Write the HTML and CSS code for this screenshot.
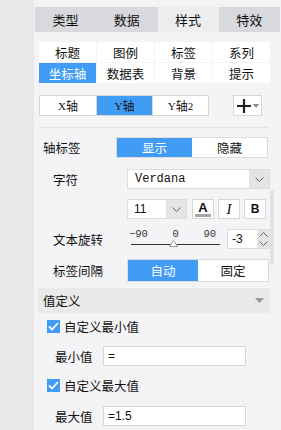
FILE: index.html
```html
<!DOCTYPE html>
<html lang="zh">
<head>
    <meta charset="UTF-8">
    <title>样式面板</title>
    <link rel="stylesheet" href="styles.css">
</head>
<body>
<div id="page">
    <div class="strip"></div>
    <div class="panel">
        <div class="tabs">
            <div class="tab">类型</div>
            <div class="tab">数据</div>
            <div class="tab active">样式</div>
            <div class="tab">特效</div>
        </div>

        <div class="subtabs">
            <div class="sub">标题</div>
            <div class="sub">图例</div>
            <div class="sub">标签</div>
            <div class="sub">系列</div>
            <div class="sub on">坐标轴</div>
            <div class="sub">数据表</div>
            <div class="sub">背景</div>
            <div class="sub">提示</div>
        </div>

        <div class="axisbar">
            <div class="axes">
                <div class="axis"><span class="lt">X</span>轴</div>
                <div class="axis on"><span class="lt">Y</span>轴</div>
                <div class="axis"><span class="lt">Y</span>轴<span class="lt">2</span></div>
            </div>
            <div class="addbtn">
                <svg width="16" height="16" viewBox="0 0 16 16"><path d="M8 1v14M1 8h14" stroke="#222" stroke-width="2.2"/></svg>
                <svg width="6" height="4" viewBox="0 0 6 4"><path d="M0 0h6L3 4z" fill="#888"/></svg>
            </div>
        </div>

        <div class="line"></div>

        <div class="row r1">
            <div class="lbl first">轴标签</div>
            <div class="toggle t1">
                <div class="opt on">显示</div>
                <div class="opt">隐藏</div>
            </div>
        </div>

        <div class="row r2">
            <div class="lbl">字符</div>
            <div class="select wide">
                <div class="val mono">Verdana</div>
                <div class="arrow"><svg width="9" height="5" viewBox="0 0 9 5"><path d="M0.5 0.5l4 4 4-4" fill="none" stroke="#666"/></svg></div>
            </div>
        </div>

        <div class="row r3">
            <div class="lbl"></div>
            <div class="select small">
                <div class="val">11</div>
                <div class="arrow"><svg width="9" height="5" viewBox="0 0 9 5"><path d="M0.5 0.5l4 4 4-4" fill="none" stroke="#666"/></svg></div>
            </div>
            <div class="fbtn color"><span>A</span><i class="swatch"></i></div>
            <div class="fbtn ital">I</div>
            <div class="fbtn bold">B</div>
        </div>

        <div class="row r4">
            <div class="lbl">文本旋转</div>
            <div class="slider">
                <div class="ticks"><span>−90</span><span>0</span><span>90</span></div>
                <div class="track">
                    <svg class="thumb" width="9" height="7" viewBox="0 0 9 7"><path d="M4.5 0.5L8.5 6.5H0.5z" fill="#fff" stroke="#999"/></svg>
                </div>
            </div>
            <div class="spin">
                <div class="num">-3</div>
                <div class="btns">
                    <svg width="9" height="5" viewBox="0 0 9 5"><path d="M0.5 4.5l4-4 4 4" fill="none" stroke="#666"/></svg>
                    <svg width="9" height="5" viewBox="0 0 9 5"><path d="M0.5 0.5l4 4 4-4" fill="none" stroke="#666"/></svg>
                </div>
            </div>
        </div>

        <div class="row r5">
            <div class="lbl">标签间隔</div>
            <div class="toggle t2">
                <div class="opt on">自动</div>
                <div class="opt">固定</div>
            </div>
        </div>

        <div class="section">
            <span>值定义</span>
            <svg width="9" height="5" viewBox="0 0 9 5"><path d="M0 0h9L4.5 5z" fill="#999"/></svg>
        </div>

        <div class="check c1">
            <div class="box"><svg width="11" height="9" viewBox="0 0 11 9"><path d="M1 4.5l3 3L10 1" fill="none" stroke="#fff" stroke-width="1.8"/></svg></div>
            <span>自定义最小值</span>
        </div>
        <div class="field f1">
            <div class="flbl">最小值</div>
            <div class="input">=</div>
        </div>

        <div class="check c2">
            <div class="box"><svg width="11" height="9" viewBox="0 0 11 9"><path d="M1 4.5l3 3L10 1" fill="none" stroke="#fff" stroke-width="1.8"/></svg></div>
            <span>自定义最大值</span>
        </div>
        <div class="field f2">
            <div class="flbl">最大值</div>
            <div class="input">=1.5</div>
        </div>

        <div class="scrollbar"></div>
    </div>
</div>
</body>
</html>
```

FILE: styles.css
```css
*{
    box-sizing: border-box;
}

body{
    margin: 0;
    font-family: "Noto Sans CJK SC", "Liberation Sans", sans-serif;
    font-size: 12px;
    color: #111;
}

#page{
    display: flex;
    width: 281px;
    height: 430px;
    overflow: hidden;
}

.strip{
    width: 35px;
    background-color: #e8e8e8;
}

.panel{
    position: relative;
    flex: 1;
    background-color: #f4f4f6;
    padding: 7px 10px 0 5px;
}

/* top tabs */
.tabs{
    display: flex;
    margin: 0 -9px 0 -4px;
    height: 25px;
}

.tab{
    flex: 1;
    display: flex;
    align-items: center;
    justify-content: center;
    background-color: #d8d9dc;
    font-size: 13px;
}

.tab.active{
    background-color: #ededee;
}

/* sub tabs */
.subtabs{
    display: grid;
    grid-template-columns: repeat(4, 57px);
    grid-auto-rows: 20px;
    gap: 1px;
    margin-top: 10px;
    width: 231px;
}

.sub{
    display: flex;
    align-items: center;
    justify-content: center;
    background-color: #fff;
    font-size: 12.5px;
}

.sub.on{
    background-color: #419cf6;
    color: #fff;
}

/* axis buttons */
.axisbar{
    display: flex;
    align-items: center;
    margin-top: 12px;
    height: 21px;
}

.axes{
    display: flex;
    border: 1px solid #d6d6d6;
    height: 21px;
}

.axis{
    width: 56px;
    display: flex;
    align-items: center;
    justify-content: center;
    background-color: #fff;
    font-size: 12px;
}

.axis + .axis{
    border-left: 1px solid #d6d6d6;
}

.axis.on{
    background-color: #419cf6;
}

.lt{
    font-family: "Liberation Serif", serif;
    font-size: 11px;
}

.addbtn{
    margin-left: 24px;
    width: 29px;
    height: 21px;
    border: 1px solid #d6d6d6;
    background-color: #fff;
    display: flex;
    align-items: center;
    justify-content: center;
    gap: 1px;
}

.line{
    margin-top: 11px;
    height: 1px;
    width: 230px;
    background-color: #e2e2e4;
}

/* form rows */
.row{
    display: flex;
    align-items: center;
}

.lbl{
    width: 88px;
    padding-left: 14px;
    font-size: 12.5px;
    flex-shrink: 0;
}

.lbl.first{
    width: 77px;
    padding-left: 4px;
}

.r1{ margin-top: 9px; height: 21px; }
.r2{ margin-top: 11px; height: 20px; }
.r3{ margin-top: 10px; height: 20px; }
.r4{ margin-top: 10px; height: 20px; }
.r5{ margin-top: 10px; height: 23px; }

.toggle{
    display: flex;
    height: 100%;
    border: 1px solid #dcdcdc;
}

.t1{ width: 152px; }
.t2{ width: 142px; }

.opt{
    flex: 1;
    display: flex;
    align-items: center;
    justify-content: center;
    background-color: #fff;
    font-size: 12.5px;
}

.opt.on{
    background-color: #419cf6;
    color: #fff;
}

.select{
    display: flex;
    height: 100%;
    border: 1px solid #dcdcdc;
    background-color: #fff;
}

.select.wide{ width: 143px; }
.select.small{ width: 60px; }

.val{
    flex: 1;
    display: flex;
    align-items: center;
    padding-left: 6px;
    font-family: "Liberation Sans", sans-serif;
    font-size: 12px;
}

.val.mono{
    font-family: "Liberation Mono", monospace;
    font-size: 12px;
    padding-left: 7px;
}

.arrow{
    width: 20px;
    display: flex;
    align-items: center;
    justify-content: center;
    background-color: #e4e4e6;
}

.fbtn{
    width: 22px;
    height: 20px;
    margin-left: 4px;
    border: 1px solid #d6d6d6;
    background-color: #fff;
    display: flex;
    align-items: center;
    justify-content: center;
}

.fbtn.color{
    margin-left: 5px;
    flex-direction: column;
    gap: 1px;
}

.fbtn.color span{
    font-family: "Liberation Sans", sans-serif;
    font-weight: bold;
    font-size: 13px;
    line-height: 11px;
}

.swatch{
    width: 16px;
    height: 3px;
    background-color: #a6a6a6;
}

.fbtn.ital{
    font-family: "Liberation Serif", serif;
    font-style: italic;
    font-size: 15px;
}

.fbtn.bold{
    font-family: "Liberation Sans", sans-serif;
    font-weight: bold;
    font-size: 12px;
}

/* slider */
.slider{
    width: 95px;
    height: 100%;
    padding-left: 2px;
}

.ticks{
    display: flex;
    justify-content: space-between;
    width: 87px;
    font-family: "Liberation Mono", monospace;
    font-size: 10.5px;
    color: #333;
    line-height: 11px;
}

.track{
    position: relative;
    margin-top: 4px;
    margin-left: 2px;
    width: 89px;
    height: 1px;
    background-color: #333;
}

.thumb{
    position: absolute;
    left: 38px;
    top: -4px;
}

.spin{
    display: flex;
    margin-left: 5px;
    height: 20px;
    border: 1px solid #dcdcdc;
}

.num{
    width: 29px;
    background-color: #fff;
    display: flex;
    align-items: center;
    padding-left: 4px;
    font-family: "Liberation Sans", sans-serif;
    font-size: 12px;
}

.btns{
    width: 13px;
    background-color: #e4e4e6;
    display: flex;
    flex-direction: column;
    align-items: center;
    justify-content: space-around;
}

/* value section */
.section{
    margin: 6px 0 0 -1px;
    width: 232px;
    height: 25px;
    background-color: #eaeaeb;
    display: flex;
    align-items: center;
    justify-content: space-between;
    padding: 0 6px 0 5px;
    font-size: 12.5px;
}

.check{
    display: flex;
    align-items: center;
    height: 14px;
    margin-left: 8px;
    gap: 4px;
    font-size: 12.5px;
}

.c1{ margin-top: 6px; }
.c2{ margin-top: 12px; }

.box{
    width: 13px;
    height: 13px;
    background-color: #419cf6;
    display: flex;
    align-items: center;
    justify-content: center;
}

.field{
    display: flex;
    align-items: center;
    height: 20px;
}

.f1{ margin-top: 13px; }
.f2{ margin-top: 14px; }

.flbl{
    width: 64px;
    padding-left: 16px;
    font-size: 12.5px;
}

.input{
    width: 143px;
    height: 20px;
    border: 1px solid #d6d6d6;
    background-color: #fff;
    display: flex;
    align-items: center;
    padding-left: 4px;
    font-family: "Liberation Sans", sans-serif;
    font-size: 12px;
}

.scrollbar{
    position: absolute;
    left: 236px;
    top: 190px;
    width: 4px;
    height: 75px;
    border-radius: 2px;
    background-color: #e2e2e4;
}
```
